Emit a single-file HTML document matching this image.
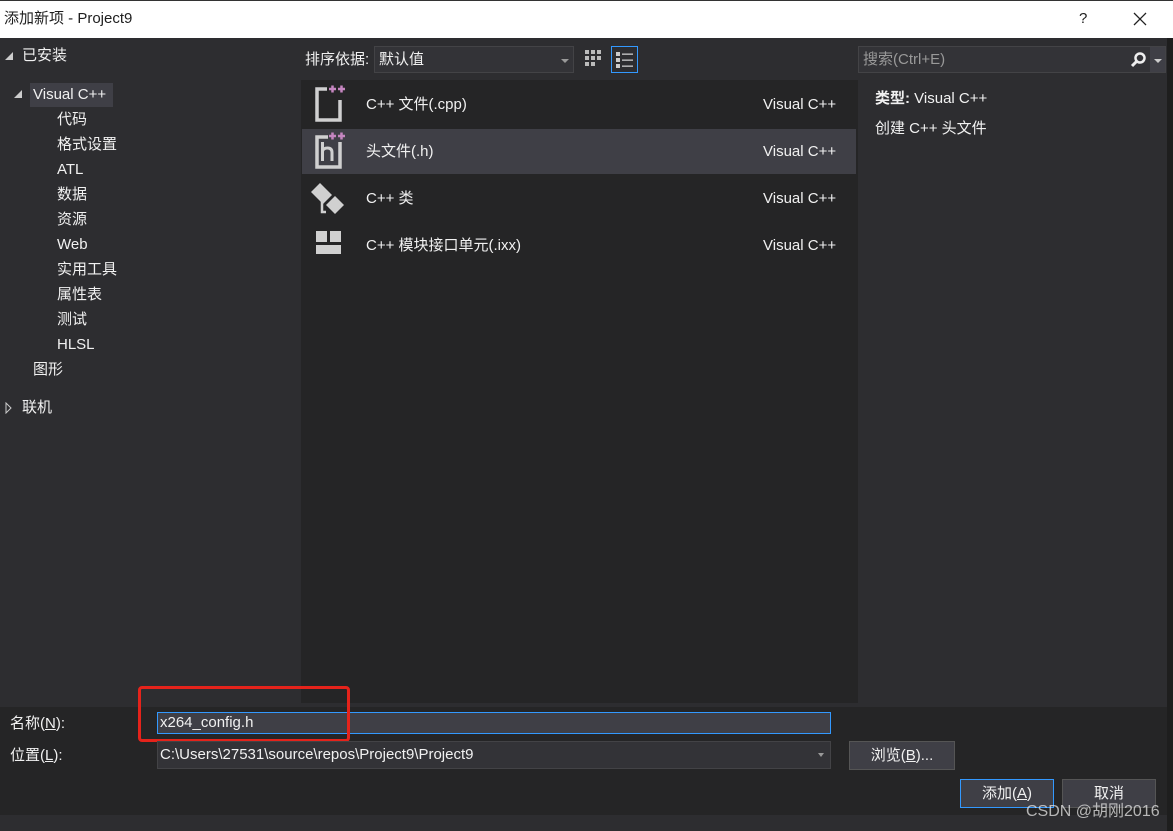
<!DOCTYPE html>
<html><head><meta charset="utf-8"><style>
*{margin:0;padding:0;box-sizing:border-box}
body{width:1173px;height:831px;background:#2d2d30;font-family:"Liberation Sans","Noto Sans CJK SC",sans-serif;font-size:14px;color:#f1f1f1;position:relative;overflow:hidden}
.a{position:absolute;white-space:nowrap;line-height:18px}
.title{left:0;top:0;width:1173px;height:38px;background:#fff;border-top:1px solid #333}
.tri{width:0;height:0;position:absolute}
.t{position:absolute;left:57px;font-size:15px;line-height:18px;white-space:nowrap}
.v{position:absolute;left:763px;font-size:15px;line-height:18px}
</style></head><body>
<div class="a title"></div>
<div class="a" style="left:4px;top:10px;color:#1e1e1e;font-size:15px">添加新项 - Project9</div>
<div class="a" style="left:1079px;top:10px;color:#1e1e1e;font-size:15px">?</div>
<svg class="a" style="left:1133px;top:12px" width="14" height="14"><path d="M1 1L13 13M13 1L1 13" stroke="#222" stroke-width="1.3"/></svg>
<div class="a" style="left:1167px;top:38px;width:6px;height:793px;background:#1e1e1e"></div>

<!-- left tree -->
<div class="tri" style="left:5px;top:52px;border-left:8px solid transparent;border-bottom:8px solid #ccc"></div>
<div class="a" style="left:22px;top:47px;font-size:15px">已安装</div>
<div class="a" style="left:30px;top:83px;width:83px;height:24px;background:#3f3f46"></div>
<div class="tri" style="left:14px;top:90px;border-left:8px solid transparent;border-bottom:8px solid #ccc"></div>
<div class="a" style="left:33px;top:86px;font-size:15px">Visual C++</div>
<div class="t" style="top:111px">代码</div>
<div class="t" style="top:136px">格式设置</div>
<div class="t" style="top:161px">ATL</div>
<div class="t" style="top:186px">数据</div>
<div class="t" style="top:211px">资源</div>
<div class="t" style="top:236px">Web</div>
<div class="t" style="top:261px">实用工具</div>
<div class="t" style="top:286px">属性表</div>
<div class="t" style="top:311px">测试</div>
<div class="t" style="top:336px">HLSL</div>
<div class="a" style="left:33px;top:361px;font-size:15px">图形</div>
<svg class="a" style="left:5px;top:402px" width="8" height="12"><path d="M1 1L6 6L1 11Z" fill="none" stroke="#ccc"/></svg>
<div class="a" style="left:22px;top:399px;font-size:15px">联机</div>

<!-- sort bar -->
<div class="a" style="left:305px;top:51px;font-size:15px">排序依据:</div>
<div class="a" style="left:374px;top:46px;width:200px;height:27px;background:#333337;border:1px solid #434346"></div>
<div class="a" style="left:379px;top:51px;font-size:15px">默认值</div>
<div class="tri" style="left:561px;top:59px;border-left:4px solid transparent;border-right:4px solid transparent;border-top:4px solid #999"></div>
<svg class="a" style="left:584px;top:49px" width="20" height="20" fill="#bbb"><rect x="1" y="1" width="4" height="4"/><rect x="7" y="1" width="4" height="4"/><rect x="13" y="1" width="4" height="4"/><rect x="1" y="7" width="4" height="4"/><rect x="7" y="7" width="4" height="4"/><rect x="13" y="7" width="4" height="4"/><rect x="1" y="13" width="4" height="4"/><rect x="7" y="13" width="4" height="4"/></svg>
<div class="a" style="left:611px;top:46px;width:27px;height:27px;border:1px solid #3399ff"></div>
<svg class="a" style="left:614px;top:49px" width="22" height="22" fill="#ccc"><rect x="2" y="3" width="4" height="4"/><rect x="2" y="9" width="4" height="4"/><rect x="2" y="15" width="4" height="4"/><rect x="8" y="4.5" width="11" height="1.3"/><rect x="8" y="10.5" width="11" height="1.3"/><rect x="8" y="16.5" width="11" height="1.3"/></svg>

<!-- search -->
<div class="a" style="left:858px;top:46px;width:308px;height:27px;background:#333337;border:1px solid #434346"></div>
<div class="a" style="left:863px;top:51px;color:#999;font-size:15px">搜索(Ctrl+E)</div>
<svg class="a" style="left:1130px;top:51px" width="18" height="18"><circle cx="10" cy="7" r="4.5" fill="none" stroke="#eee" stroke-width="2.5"/><path d="M7 10L2 15" stroke="#eee" stroke-width="3"/></svg>
<div class="a" style="left:1150px;top:47px;width:15px;height:25px;background:#3f3f46"></div>
<div class="tri" style="left:1154px;top:59px;border-left:4px solid transparent;border-right:4px solid transparent;border-top:4px solid #ccc"></div>

<!-- list -->
<div class="a" style="left:301px;top:80px;width:557px;height:623px;background:#252526"></div>
<div class="a" style="left:302px;top:129px;width:554px;height:45px;background:#3f3f46"></div>
<svg class="a" style="left:310px;top:82px" width="42" height="185">
<g fill="none" stroke="#d0d0d0" stroke-width="3.5"><path d="M17 7H7V38H30V18"/></g>
<g stroke="#c586c0" stroke-width="2.5"><path d="M19 7H26M22.5 3.5V10.5M28 7H35M31.5 3.5V10.5"/></g>
<g transform="translate(0,47)"><rect x="7" y="8" width="23" height="30" fill="none" stroke="#d0d0d0" stroke-width="3.5"/><path d="M12.5 13V32M12.5 22Q13.5 19 17.5 19Q22 19 22 23.5V32" fill="none" stroke="#d0d0d0" stroke-width="3"/><rect x="18" y="2" width="18" height="11" fill="#3f3f46"/><g stroke="#c586c0" stroke-width="2.5"><path d="M19 7H26M22.5 3.5V10.5M28 7H35M31.5 3.5V10.5"/></g></g>
<g transform="translate(0,96)" fill="#d0d0d0"><path d="M1 14L10 5L22 17L13 26Z"/><path d="M16 27L25 18L34 27L25 36Z"/><path d="M12 23V34H16" fill="none" stroke="#d0d0d0" stroke-width="2.5"/></g>
<g transform="translate(0,142)" fill="#d0d0d0"><rect x="6" y="7" width="11" height="11"/><rect x="20" y="7" width="11" height="11"/><rect x="6" y="21" width="25" height="9"/></g>
</svg>
<div class="a" style="left:366px;top:96px;font-size:15px">C++ 文件(.cpp)</div>
<div class="a" style="left:366px;top:143px;font-size:15px">头文件(.h)</div>
<div class="a" style="left:366px;top:190px;font-size:15px">C++ 类</div>
<div class="a" style="left:366px;top:237px;font-size:15px">C++ 模块接口单元(.ixx)</div>
<div class="v" style="top:96px">Visual C++</div>
<div class="v" style="top:143px">Visual C++</div>
<div class="v" style="top:190px">Visual C++</div>
<div class="v" style="top:237px">Visual C++</div>

<!-- details -->
<div class="a" style="left:875px;top:90px;font-size:15px"><b>类型:</b> Visual C++</div>
<div class="a" style="left:875px;top:120px;font-size:15px">创建 C++ 头文件</div>

<!-- bottom -->
<div class="a" style="left:0;top:707px;width:1167px;height:108px;background:#252526"></div>
<div class="a" style="left:10px;top:715px;font-size:15px">名称(<u>N</u>):</div>
<div class="a" style="left:157px;top:712px;width:674px;height:22px;background:#3f3f46;border:1px solid #3399ff"></div>
<div class="a" style="left:160px;top:714px;font-size:15px">x264_config.h</div>
<div class="a" style="left:138px;top:686px;width:212px;height:56px;border:3px solid #e5231b;border-radius:4px"></div>
<div class="a" style="left:10px;top:747px;font-size:15px">位置(<u>L</u>):</div>
<div class="a" style="left:157px;top:741px;width:674px;height:28px;background:#333337;border:1px solid #434346"></div>
<div class="a" style="left:160px;top:746px;font-size:15px">C:\Users\27531\source\repos\Project9\Project9</div>
<div class="tri" style="left:818px;top:753px;border-left:3.5px solid transparent;border-right:3.5px solid transparent;border-top:4px solid #999"></div>
<div class="a" style="left:849px;top:741px;width:106px;height:29px;background:#3f3f46;border:1px solid #555;text-align:center;line-height:27px;font-size:15px">浏览(<u>B</u>)...</div>
<div class="a" style="left:960px;top:779px;width:94px;height:29px;background:#3f3f46;border:1px solid #3399ff;text-align:center;line-height:27px;font-size:15px">添加(<u>A</u>)</div>
<div class="a" style="left:1062px;top:779px;width:94px;height:29px;background:#3f3f46;border:1px solid #555;text-align:center;line-height:27px;font-size:15px">取消</div>
<div class="a" style="left:1026px;top:803px;font-size:16px;color:rgba(230,230,230,0.75)">CSDN @胡刚2016</div>
</body></html>
